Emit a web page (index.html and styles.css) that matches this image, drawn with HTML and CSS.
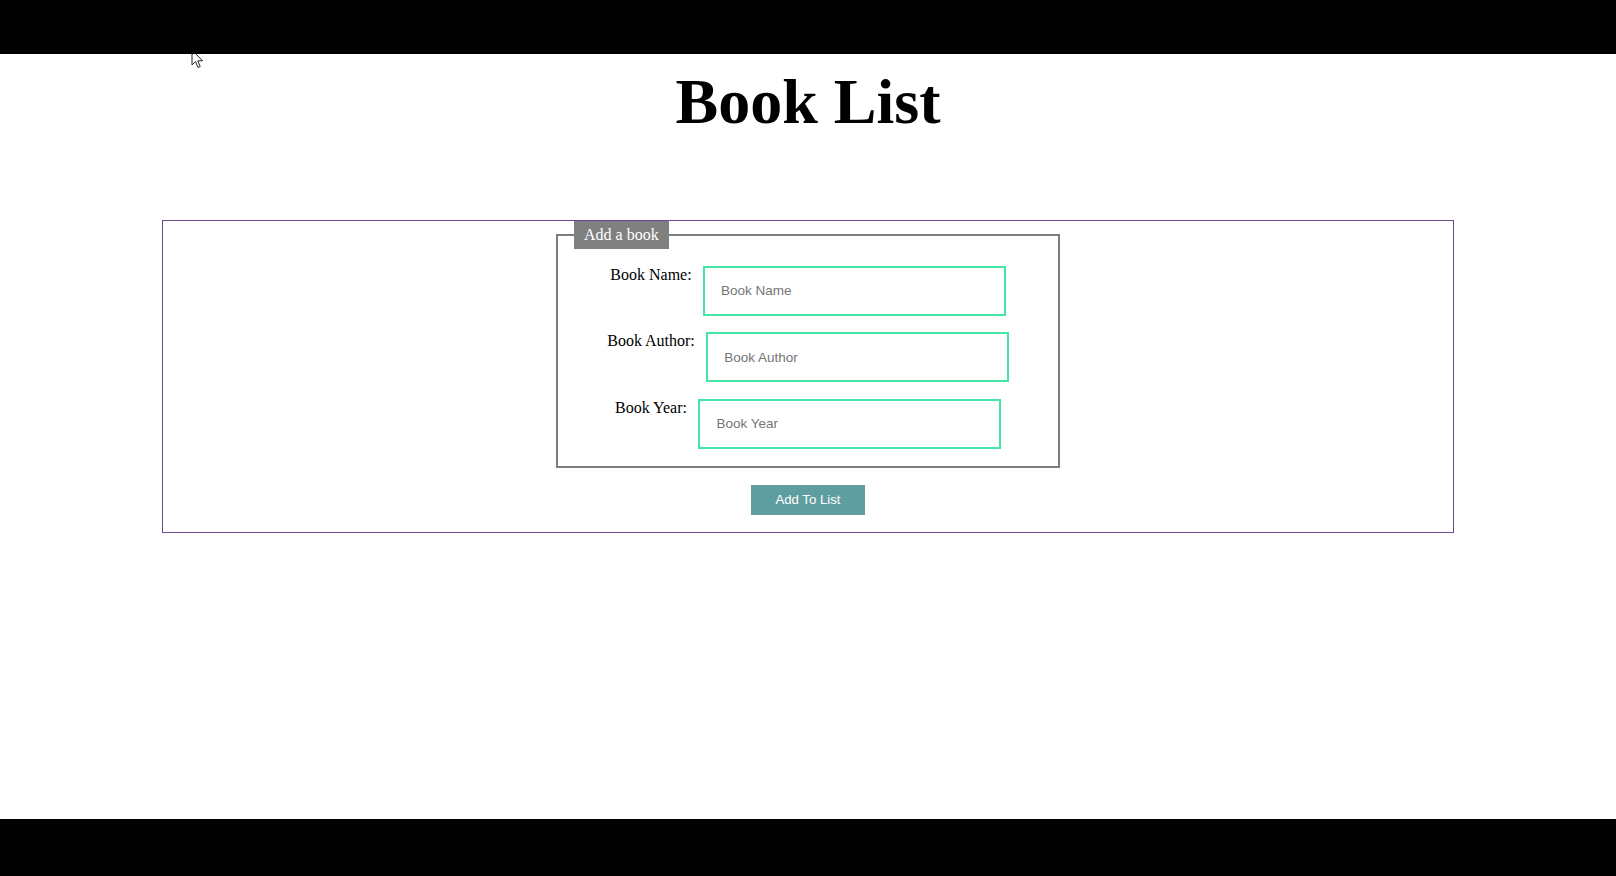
FILE: index.html
```html
<!DOCTYPE html>
<html lang="en">
<head>
<meta charset="utf-8">
<title>Book List</title>
<link rel="stylesheet" href="styles.css">
</head>
<body>
<div class="bar bar-top"></div>
<main class="page">
  <svg class="cursor" width="13" height="20" viewBox="0 0 13 20" aria-hidden="true">
    <path d="M1 1 L1 16 L4.5 12.5 L7 18.5 L9.2 17.6 L6.8 11.8 L11.5 11.8 Z" fill="#fff" stroke="#222" stroke-width="1" stroke-linejoin="round"/>
  </svg>
  <h1 class="title">Book List</h1>
  <form class="panel">
    <fieldset class="book-fields">
      <legend class="book-legend">Add a book</legend>
      <div class="row">
        <label class="row-label" for="name">Book Name:</label>
        <input class="row-input" id="name" type="text" placeholder="Book Name">
      </div>
      <div class="row">
        <label class="row-label" for="author">Book Author:</label>
        <input class="row-input" id="author" type="text" placeholder="Book Author">
      </div>
      <div class="row">
        <label class="row-label" for="year">Book Year:</label>
        <input class="row-input" id="year" type="text" placeholder="Book Year">
      </div>
    </fieldset>
    <button class="add-btn" type="button">Add To List</button>
  </form>
</main>
<div class="bar bar-bottom"></div>
</body>
</html>
```
FILE: styles.css
```css
html, body {
  margin: 0;
  padding: 0;
  background: #000;
}

body {
  width: 1616px;
  height: 876px;
  overflow: hidden;
  display: flex;
  flex-direction: column;
  font-family: "Liberation Serif", "Times New Roman", serif;
}

.bar {
  background: #000;
  flex: none;
}

.bar-top {
  height: 54px;
}

.bar-bottom {
  flex: 1;
}

.page {
  position: relative;
  overflow: hidden;
  height: 765px;
  background: #fff;
  flex: none;
}

.cursor {
  position: absolute;
  left: 191px;
  top: -5px;
}

.title {
  margin: 12px 0 0;
  font-family: "Liberation Serif", "Times New Roman", serif;
  font-size: 64px;
  line-height: 72px;
  font-weight: bold;
  text-align: center;
  color: #000;
}

.panel {
  box-sizing: border-box;
  width: 80%;
  margin: 82px auto 0;
  border: 1px solid #684b92;
  padding: 0 0 16.5px;
}

.book-fields {
  box-sizing: border-box;
  width: 504px;
  margin: 0 auto;
  padding: 16.7px 0 17.4px;
  border: 2px solid #7d7d7d;
  display: flex;
  flex-direction: column;
  gap: 16.6px;
  min-width: 0;
}

.book-legend {
  margin-left: 16px;
  padding: 5px 10px;
  background: #808080;
  color: #fff;
  font-size: 16px;
}

.row {
  display: flex;
  justify-content: center;
  align-items: flex-start;
  gap: 11.4px;
}

.row-label {
  font-size: 16px;
  color: #000;
  line-height: normal;
}

.row-input {
  box-sizing: border-box;
  width: 302.6px;
  height: 50px;
  margin: 0;
  padding: 0 16px;
  border: 2px solid #45e6a3;
  outline: none;
  background: #fff;
  font-family: "Liberation Sans", Arial, sans-serif;
  font-size: 13.5px;
  color: #222;
}

.row-input::placeholder {
  color: #757575;
}

.add-btn {
  display: block;
  box-sizing: border-box;
  width: 114.6px;
  height: 30.7px;
  margin: 16.3px auto 0;
  padding: 0;
  border: none;
  background: #5f9ea0;
  color: #fff;
  font-family: "Liberation Sans", Arial, sans-serif;
  font-size: 13.2px;
  cursor: pointer;
}
```
